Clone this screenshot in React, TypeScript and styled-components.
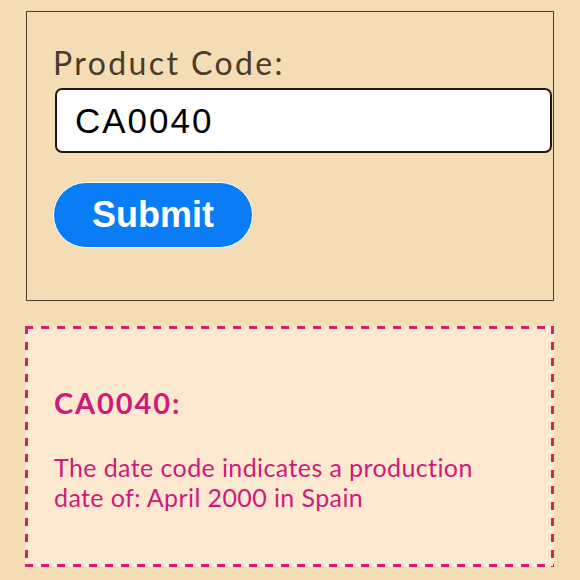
import React from "react";
import styled, { createGlobalStyle } from "styled-components";

const Global = createGlobalStyle`
  html, body { margin: 0; padding: 0; background: #f4dcb4; }
  body { font-family: Lato, "Open Sans", sans-serif; }
`;

const Page = styled.div`
  width: 580px;
  height: 580px;
  box-sizing: border-box;
  padding: 11px 26px 0 25px;
  display: flex;
  flex-direction: column;
  gap: 25px;
  background: #f4dcb4;
`;

const FormBox = styled.form`
  box-sizing: border-box;
  margin-left: 1px;
  width: 528px;
  height: 290px;
  border: 1px solid #4b3b2b;
  padding: 32px 0 0 26px;
  display: flex;
  flex-direction: column;
  align-items: flex-start;
`;

const Label = styled.label`
  font-family: Lato, "Open Sans", sans-serif;
  font-size: 32px;
  line-height: 38px;
  letter-spacing: 2.4px;
  color: #4a3a2a;
  margin-bottom: 6px;
`;

const Input = styled.input`
  box-sizing: border-box;
  margin-left: 2px;
  width: 497px;
  height: 65px;
  border: 2px solid #1e1a16;
  border-radius: 7px;
  background: #ffffff;
  padding: 0 0 0 18px;
  font-family: "Liberation Sans", Arial, sans-serif;
  font-size: 35px;
  letter-spacing: 2px;
  color: #000;
  outline: none;
`;

const Button = styled.button`
  box-sizing: border-box;
  margin-top: 29px;
  width: 200px;
  height: 66px;
  border-radius: 33px;
  border: 1.5px solid #ffffff;
  background: #0a7df6;
  color: #ffffff;
  font-family: "Liberation Sans", Arial, sans-serif;
  font-weight: 700;
  font-size: 36px;
  padding: 0;
  cursor: pointer;
`;

const pink = "#d81b73";

const ResultBox = styled.section`
  box-sizing: border-box;
  width: 529px;
  height: 241px;
  background:
    linear-gradient(90deg, ${pink} 50%, transparent 50%) left top / 16px 3px repeat-x,
    linear-gradient(90deg, ${pink} 50%, transparent 50%) left bottom / 16px 3px repeat-x,
    linear-gradient(180deg, ${pink} 50%, transparent 50%) left top / 3px 16px repeat-y,
    linear-gradient(180deg, ${pink} 50%, transparent 50%) right top / 3px 16px repeat-y,
    #fde9cf;
  padding: 60px 30px 0 29px;
  color: #d0197a;
`;

const Heading = styled.h2`
  margin: 0;
  font-family: Lato, "Open Sans", sans-serif;
  font-weight: 700;
  font-size: 29px;
  line-height: 34px;
  letter-spacing: 1.9px;
`;

const Text = styled.p`
  margin: 32px 0 0 0;
  max-width: 440px;
  font-family: Lato, "Open Sans", sans-serif;
  font-size: 25px;
  line-height: 30px;
  letter-spacing: 0.4px;
`;

export default function App() {
  return (
    <>
      <Global />
      <Page>
        <FormBox onSubmit={(e) => e.preventDefault()}>
          <Label htmlFor="code">Product Code:</Label>
          <Input id="code" defaultValue="CA0040" />
          <Button type="submit">Submit</Button>
        </FormBox>
        <ResultBox>
          <Heading>CA0040:</Heading>
          <Text>The date code indicates a production date of: April 2000 in Spain</Text>
        </ResultBox>
      </Page>
    </>
  );
}
